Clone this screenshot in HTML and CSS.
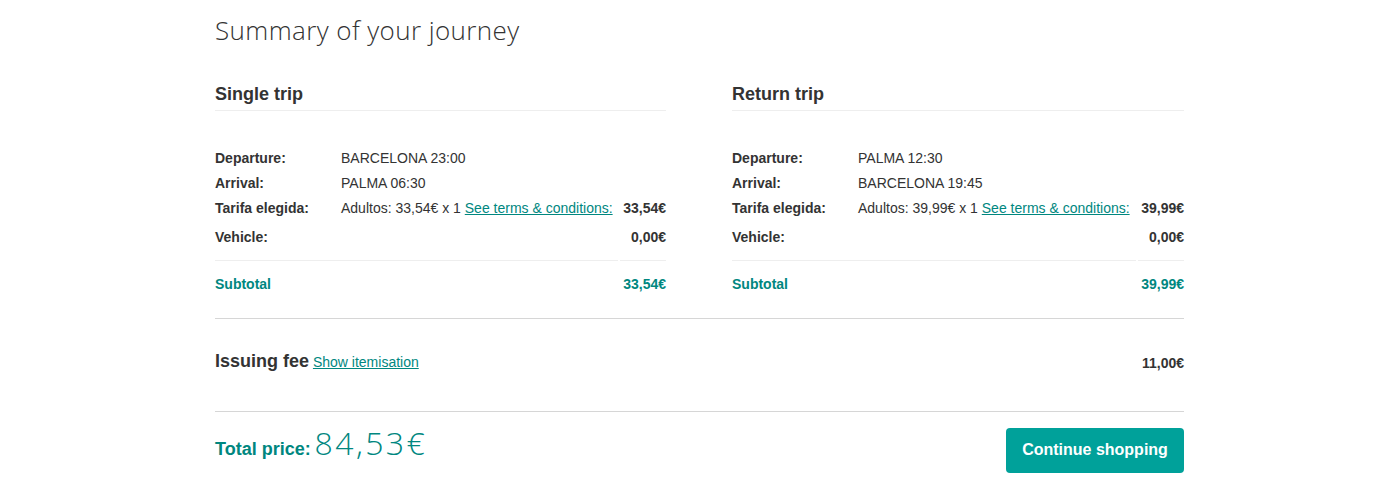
FILE: index.html
```html
<!DOCTYPE html>
<html>
<head>
<meta charset="utf-8">
<link rel="stylesheet" href="styles.css">
</head>
<body>
<div class="page">
  <h1 class="title">Summary of your journey</h1>
  <div class="trips">
    <section class="trip">
      <h2 class="trip-head">Single trip</h2>
      <div class="grid">
        <div class="lbl">Departure:</div><div class="val">BARCELONA 23:00</div><div class="price"></div>
        <div class="lbl">Arrival:</div><div class="val">PALMA 06:30</div><div class="price"></div>
        <div class="lbl">Tarifa elegida:</div><div class="val">Adultos: 33,54€ x 1 <a class="link" href="#">See terms &amp; conditions:</a></div><div class="price">33,54€</div>
        <div class="lbl veh">Vehicle:</div><div class="val veh"></div><div class="price veh">0,00€</div>
        <div class="sep sep-wide"></div><div class="sep"></div>
        <div class="lbl sub">Subtotal</div><div class="val sub"></div><div class="price sub">33,54€</div>
      </div>
    </section>
    <section class="trip">
      <h2 class="trip-head">Return trip</h2>
      <div class="grid">
        <div class="lbl">Departure:</div><div class="val">PALMA 12:30</div><div class="price"></div>
        <div class="lbl">Arrival:</div><div class="val">BARCELONA 19:45</div><div class="price"></div>
        <div class="lbl">Tarifa elegida:</div><div class="val">Adultos: 39,99€ x 1 <a class="link" href="#">See terms &amp; conditions:</a></div><div class="price">39,99€</div>
        <div class="lbl veh">Vehicle:</div><div class="val veh"></div><div class="price veh">0,00€</div>
        <div class="sep sep-wide"></div><div class="sep"></div>
        <div class="lbl sub">Subtotal</div><div class="val sub"></div><div class="price sub">39,99€</div>
      </div>
    </section>
  </div>
  <div class="fee">
    <div class="fee-left"><span class="fee-title">Issuing fee</span> <a class="link fee-link" href="#">Show itemisation</a></div>
    <div class="fee-price">11,00€</div>
  </div>
  <div class="total">
    <div class="total-left"><span class="total-label">Total price:</span> <span class="total-amount">84,53€</span></div>
    <button class="btn">Continue shopping</button>
  </div>
</div>
</body>
</html>
```

FILE: styles.css
```css
html, body {
  margin: 0;
  padding: 0;
  background: #fff;
}
body {
  font-family: "Liberation Sans", Arial, sans-serif;
  color: #333;
  font-size: 14px;
}
.page {
  width: 969px;
  margin-left: 215px;
}
.title {
  margin: 0;
  padding-top: 14px;
  font-family: "Open Sans", sans-serif;
  font-weight: 300;
  font-size: 26px;
  line-height: 32px;
  color: #333;
  letter-spacing: 0.4px;
}
.trips {
  display: flex;
  justify-content: space-between;
  margin-top: 37px;
}
.trip {
  width: 451px;
}
.trip + .trip {
  width: 452px;
}
.trip-head {
  margin: 0;
  font-size: 18px;
  font-weight: bold;
  line-height: 22px;
  padding-bottom: 5px;
  border-bottom: 1px solid #eee;
  color: #333;
}
.grid {
  display: grid;
  grid-template-columns: 124px 1fr 46px;
  column-gap: 2px;
  margin-top: 35px;
}
.lbl {
  font-weight: bold;
  line-height: 25px;
}
.val {
  line-height: 25px;
}
.price {
  font-weight: bold;
  text-align: right;
  line-height: 25px;
}
.veh {
  line-height: 33px;
  padding-bottom: 6px;
}
.sep {
  border-top: 1px solid #eee;
  height: 0;
}
.sep-wide {
  grid-column: 1 / 3;
}
.sub {
  color: #00877f;
  line-height: 47px;
  padding-bottom: 0;
}
.link {
  color: #00877f;
  text-decoration: underline;
}
.fee {
  display: flex;
  justify-content: space-between;
  align-items: center;
  border-top: 1px solid #d6d6d6;
  border-bottom: 1px solid #d6d6d6;
  height: 84px;
  padding-bottom: 8px;
  margin-top: 10px;
}
.fee-title {
  font-size: 18px;
  font-weight: bold;
}
.fee-link {
  font-size: 14px;
}
.fee-price {
  font-weight: bold;
  padding-top: 3px;
}
.total {
  display: flex;
  justify-content: space-between;
  align-items: baseline;
  margin-top: 9px;
}
.total-left {
  color: #00877f;
}
.total-label {
  font-size: 18px;
  font-weight: bold;
}
.total-amount {
  font-family: "Open Sans", sans-serif;
  font-weight: 300;
  font-size: 32px;
  letter-spacing: 2.4px;
}
.btn {
  background: #00a19a;
  color: #fff;
  border: none;
  border-radius: 4px;
  width: 178px;
  height: 45px;
  font-family: "Liberation Sans", Arial, sans-serif;
  font-weight: bold;
  font-size: 16px;
  padding: 0;
}
```
